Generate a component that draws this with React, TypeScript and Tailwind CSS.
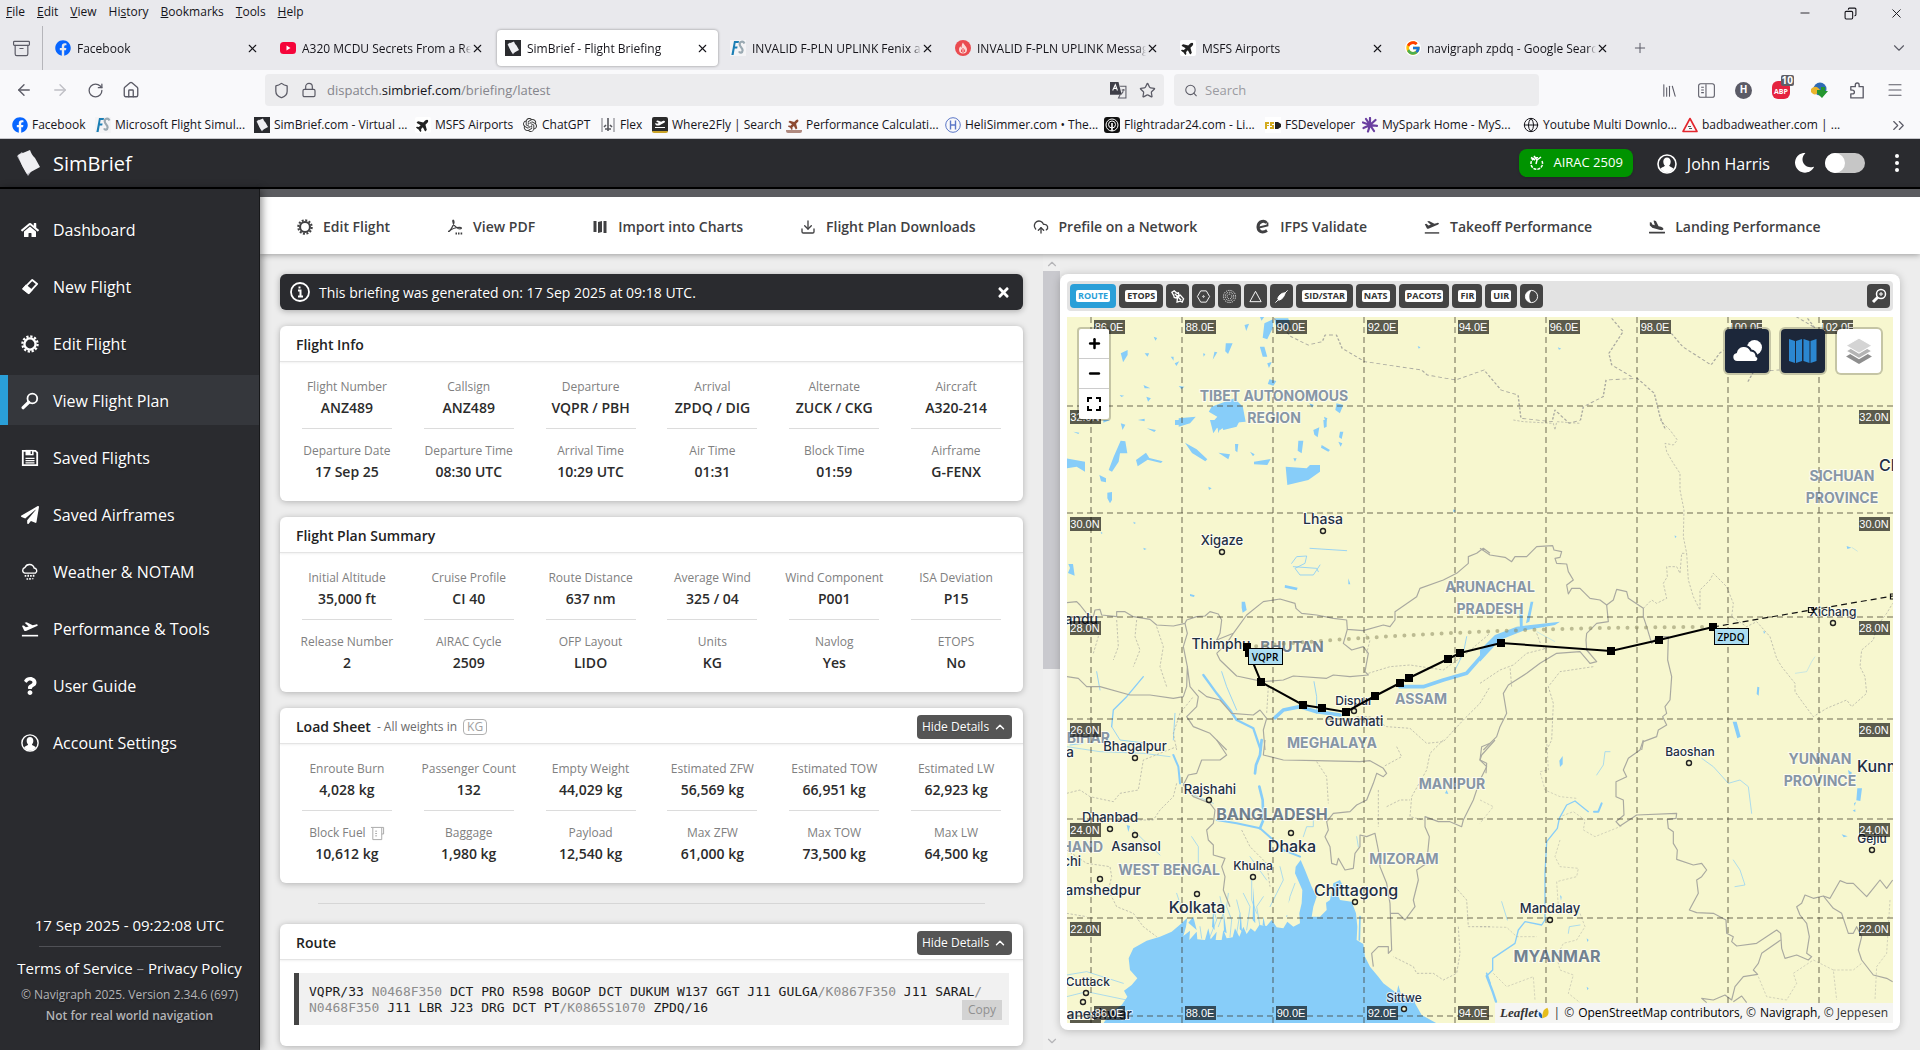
import type { ReactNode } from "react";
import {
    ArrowLeft, ArrowRight, ChevronDown, ChevronUp, ChevronsRight, Copy, Globe, House, Library,
    Lock, Menu, Minus, Plus, Puzzle, RotateCw, Search, Shield, Star, X, Archive, Download, CloudUpload
} from "lucide-react";
import {
    FaFacebook, FaHome, FaMoon, FaPaperPlane, FaPlane, FaPlaneArrival, FaPlaneDeparture,
    FaQuestion, FaTimes
} from "react-icons/fa";
import { FcGoogle } from "react-icons/fc";
import { SiOpenai } from "react-icons/si";

/* ---------- icons ---------- */

function Gear(){
    return (
        <svg viewBox="0 0 20 20" className="size-full" fill="none" stroke="currentColor">
            <circle cx="10" cy="10" r="6.2" strokeWidth="2.6" />
            <circle cx="10" cy="10" r="8.4" strokeWidth="2.6" strokeDasharray="2.5 1.9" />
        </svg>
    )
}

function Eraser(){
    return (
        <svg viewBox="0 0 20 20" className="size-full" fill="none" stroke="currentColor" strokeWidth="2">
            <path d="M12.5 2.2 18 6.6 8.5 16.8 2.6 12z" strokeLinejoin="round" />
            <path d="M5.6 8.6 11.6 13.4 8.5 16.8 2.6 12z" fill="currentColor" />
        </svg>
    )
}

function Magnifier(){
    return (
        <svg viewBox="0 0 20 20" className="size-full" fill="none" stroke="currentColor">
            <circle cx="12.6" cy="7.2" r="5.4" strokeWidth="2" />
            <path d="M8.6 11.4 2.4 17.4" strokeWidth="3.6" strokeLinecap="round" />
        </svg>
    )
}

function Floppy(){
    return (
        <svg viewBox="0 0 20 20" className="size-full" fill="none" stroke="currentColor">
            <path d="M2 2h14l2 2v14H2z" strokeWidth="2" />
            <path d="M5 1h9v6H5z" fill="currentColor" stroke="none" />
            <path d="M11.5 2.5v3" stroke="#2a2b2f" strokeWidth="1.6" />
            <path d="M5 10.5h10M5 13h10M5 15.5h10" strokeWidth="1.3" />
        </svg>
    )
}

function Snow(){
    return (
        <svg viewBox="0 0 20 20" className="size-full" fill="none" stroke="currentColor" strokeWidth="1.5">
            <path d="M4.2 11.2a3.2 3.2 0 0 1 .2-6.2 5.4 5.4 0 0 1 10.2.6 3 3 0 0 1 1.4 5.6z" />
            <path d="M5 13.4v2M8 13v2.4M11 13.4v2M14 13v2.4M7 17v1.6M10 16.6v2M13 17v1" strokeWidth="1.8" />
        </svg>
    )
}

function TakeOff(){
    return (
        <svg viewBox="0 0 20 20" className="size-full" fill="currentColor">
            <path d="M1 16.500h18v1.800H1z" />
            <path d="M1 6.500 3 6l2.500 2 3-.8L4 3l2.300-.6 6.700 3.500 3.600-1c1.800-.5 3 1 1.200 1.900L5.500 12.200c-.9.300-1.500.1-2-.5z" />
        </svg>
    )
}

function Person(){
    return (
        <svg viewBox="0 0 20 20" className="size-full" fill="currentColor">
            <circle cx="10" cy="10" r="9" fill="none" stroke="currentColor" strokeWidth="1.6" />
            <path d="M10 3.4c2.3 0 3.7 1.7 3.7 4 0 1.800-.7 3.400-1.600 4.200.2 1.300 3.300 1.700 4.500 3.200A8.400 8.400 0 0 1 10 18.500a8.400 8.400 0 0 1-6.600-3.700c1.200-1.500 4.300-1.900 4.500-3.200-.9-.8-1.600-2.400-1.600-4.200 0-2.300 1.400-4 3.700-4z" />
        </svg>
    )
}

function Pages(){
    return (
        <svg viewBox="0 0 24 28" className="size-full">
            <path d="M1 7 6 3l11 17-5 7z" fill="#b9b9c0" />
            <path d="M2 6 14 1c1 3 2 5 5 8l5 9-13 7C8 21 5 15 2 6z" fill="#efeff2" />
        </svg>
    )
}

function Charts(){
    return (
        <svg viewBox="0 0 16 16" className="size-full" fill="currentColor">
            <path d="M1.500 2h3v11h-3zM6 3l4-1v11l-4 1zM11.500 2h3v12h-3z" />
        </svg>
    )
}

function PdfSwirl(){
    return (
        <svg viewBox="0 0 16 16" className="size-full" fill="none" stroke="currentColor" strokeWidth="1.200">
            <path d="M1 12.500c2-.2 5-4.500 6-9C7.200.8 5.600.6 5.800 2.400 6 5.500 9 9.600 13 9.800c2 0 2-1.400 0-1.500C9 8.200 4 10 2 12.600" />
            <path d="M8.500 14.500h1.500M11 14.500h1.500M13.600 14.500h1.600" strokeWidth="2.200" />
        </svg>
    )
}

function EuroMark(){
    return (
        <svg viewBox="0 0 16 16" className="size-full" fill="none" stroke="currentColor">
            <path d="M12.500 4C11 1.200 4.500 1.500 4 7.500c0 5.500 4.500 6.800 9 4" strokeWidth="3" />
            <path d="M3 9 13.500 6.500V3.500" strokeWidth="1.800" />
        </svg>
    )
}

function Jug(){
    return (
        <svg viewBox="0 0 16 16" className="size-[15px]" fill="none" stroke="#a5a5a5">
            <path d="M1 1.500h13.500v7h-2M3 2v12.500h9.500V2M5.500 5.500h2M5.500 8h2M5.500 10.500h2" />
        </svg>
    )
}

function FsIcon(){
    return (
        <svg viewBox="0 0 16 16" className="size-4">
            <rect width="16" height="16" fill="#f4f4f6" />
            <path d="M4 1h5l-.4 2H5.600L5 6.500h2.600l-.4 2H4.700L3.600 15H1.400z" fill="#1c7fb5" />
            <path d="M14.500 3.500C13 .5 9.500 1.500 9.700 4.500c.2 3 3.200 3 2.900 6-.2 2.500-2.600 3-3.600.9" fill="none" stroke="#9aa9b2" strokeWidth="2.200" />
        </svg>
    )
}

function SimIcon(){
    return (
        <span className="block size-4 bg-[#2a2b2f] px-[2px] py-px"><Pages /></span>
    )
}

function YtIcon(){
    return (
        <svg viewBox="0 0 16 16" className="size-4">
            <rect y="2" width="16" height="12" rx="3.500" fill="#f5053a" />
            <path d="M6.500 5.500v5l4-2.500z" fill="#fff" />
        </svg>
    )
}

function FlameIcon(){
    return (
        <svg viewBox="0 0 16 16" className="size-4">
            <circle cx="8" cy="8" r="8" fill="#ea4b50" />
            <path d="M8 2.500c.5 2 4 4 4 7a4 4 0 0 1-8 0C4 8 4.800 7 5.500 6.300c.3 1 .7 1.300 1.200 1.400C6.500 5.500 7 3.500 8 2.500z" fill="#fbd9d6" />
            <path d="M8 8v5M6.500 9.500V12M9.600 9.500V12" stroke="#ea4b50" />
        </svg>
    )
}

function BoxIcon({ bg, children }: { bg: string; children: ReactNode }){
    return <span className={"flex size-4 items-center justify-center overflow-hidden rounded-xs text-[10px] " + bg}>{children}</span>
}

function AirportsIcon(){
    return <BoxIcon bg="bg-white text-[#222]"><FaPlane className="size-[14px] -rotate-45" /></BoxIcon>
}

function FlexIcon(){
    return (
        <svg viewBox="0 0 16 16" className="size-4" fill="none" stroke="#55565c">
            <path d="M2 1v14M14 1v14" stroke="#a0a0a6" strokeWidth="1.500" />
            <path d="M8 1v13M5 12h6M6 8l-2 2M10 8l2 2" strokeWidth="1.600" />
        </svg>
    )
}

function HeliIcon(){
    return (
        <svg viewBox="0 0 16 16" className="size-4" fill="none" stroke="#5b77c7">
            <circle cx="8" cy="8" r="7.300" strokeWidth="1" />
            <path d="M5.500 3.500v9M10.500 3.500v9M5.500 8h5" strokeWidth="1.400" />
        </svg>
    )
}

function RadarIcon(){
    return (
        <svg viewBox="0 0 16 16" className="size-4" fill="none" stroke="#fff">
            <rect width="16" height="16" rx="3" fill="#111" stroke="none" />
            <circle cx="8" cy="8" r="6" />
            <circle cx="8" cy="7.500" r="3.500" />
            <path d="M8 6v8" strokeWidth="1.600" />
        </svg>
    )
}

function FsdIcon(){
    return (
        <svg viewBox="0 0 16 16" className="size-4">
            <rect width="16" height="16" fill="#fff" />
            <path d="M0 5h4v2H2v1h2v1H2v3H0zM5 5h4v2H7v1h2v4H5v-2h2V9H5z" fill="#d3ab1e" />
            <path d="M10 5h3l3 2v3l-3 2h-3z" fill="#222" />
        </svg>
    )
}

function SparkIcon(){
    return (
        <svg viewBox="0 0 16 16" className="size-4" stroke="#6a3fa0" strokeWidth="2.200" strokeLinecap="round">
            <path d="M8 8 8 1M8 8 13.500 3M8 8l7 .8M8 8l4 6M8 8l-2 6.500M8 8l-6.500 3M8 8 1 5.500M8 8 4 2" />
        </svg>
    )
}

function WarnIcon(){
    return (
        <svg viewBox="0 0 16 16" className="size-4" fill="none">
            <path d="M8 1.500 15 14.500H1z" stroke="#e3262d" strokeWidth="1.600" strokeLinejoin="round" />
            <path d="M6 9.500h3M7 11.500h3" stroke="#555" />
        </svg>
    )
}

function PuzzleIcon(){
    return (
        <svg viewBox="0 0 16 16" className="size-[18px]" fill="none" stroke="currentColor" strokeWidth="1.200" strokeLinejoin="round">
            <path d="M2.500 5h4V3.500a1.700 1.700 0 0 1 3.400 0V5h3.600v10H2.500v-3.500H4a1.700 1.700 0 0 0 0-3.400H2.500z" />
        </svg>
    )
}

/* ---------- browser window ---------- */

const menus = [["", "F", "ile"], ["", "E", "dit"], ["", "V", "iew"], ["Hi", "s", "tory"], ["", "B", "ookmarks"], ["", "T", "ools"], ["", "H", "elp"]];

const tabs = [
    { icon: <FaFacebook className="size-4 text-[#0866ff]" />, title: "Facebook" },
    { icon: <YtIcon />, title: "A320 MCDU Secrets From a Rea" },
    { icon: <SimIcon />, title: "SimBrief - Flight Briefing", active: true },
    { icon: <FsIcon />, title: "INVALID F-PLN UPLINK Fenix a3" },
    { icon: <FlameIcon />, title: "INVALID F-PLN UPLINK Messag" },
    { icon: <AirportsIcon />, title: "MSFS Airports" },
    { icon: <FcGoogle className="size-4 rounded-full bg-white" />, title: "navigraph zpdq - Google Searc" },
];

const bookmarks = [
    { w: "w-[83px]", icon: <FaFacebook className="size-4 text-[#0866ff]" />, title: "Facebook" },
    { w: "w-[159px]", icon: <FsIcon />, title: "Microsoft Flight Simul..." },
    { w: "w-[161px]", icon: <SimIcon />, title: "SimBrief.com - Virtual ..." },
    { w: "w-[107px]", icon: <AirportsIcon />, title: "MSFS Airports" },
    { w: "w-[78px]", icon: <SiOpenai className="size-[14px] text-[#333]" />, title: "ChatGPT" },
    { w: "w-[52px]", icon: <FlexIcon />, title: "Flex" },
    { w: "w-[134px]", icon: <BoxIcon bg="bg-[#2b2b2b] text-white border-b-2 border-[#c9a227]"><FaPlaneDeparture /></BoxIcon>, title: "Where2Fly | Search" },
    { w: "w-[159px]", icon: <BoxIcon bg="text-[#8d4a32] border-b-3 border-[#b08a80]"><FaPlane className="size-3 -rotate-45" /></BoxIcon>, title: "Performance Calculati..." },
    { w: "w-[159px]", icon: <HeliIcon />, title: "HeliSimmer.com • The..." },
    { w: "w-[161px]", icon: <RadarIcon />, title: "Flightradar24.com - Li..." },
    { w: "w-[97px]", icon: <FsdIcon />, title: "FSDeveloper" },
    { w: "w-[161px]", icon: <SparkIcon />, title: "MySpark Home - MyS..." },
    { w: "w-[159px]", icon: <Globe className="size-4" strokeWidth={1.5} />, title: "Youtube Multi Downlo..." },
    { w: "w-[159px]", icon: <WarnIcon />, title: "badbadweather.com | ..." },
];

function Browser(){
    return (
        <div className="shrink-0 text-xs text-[#15141a]">
            <div className="flex h-[26px] items-start justify-between bg-[#e9e9ed]">
                <nav className="flex gap-3 pl-[6px] pt-[3px] text-[12px] leading-[18px]">
                    {menus.map(([a, b, c]) => <button key={a + b + c}>{a}<u>{b}</u>{c}</button>)}
                </nav>
                <div className="flex h-[26px] items-center gap-8 pr-4">
                    <button aria-label="Minimize"><Minus size={14} strokeWidth={1.5} /></button>
                    <button aria-label="Restore"><Copy size={13} strokeWidth={2} className="rotate-90" /></button>
                    <button aria-label="Close window"><X size={15} strokeWidth={1.5} /></button>
                </div>
            </div>
            <div className="flex h-11 items-stretch bg-[#e9e9ed]">
                <button className="mr-[4px] flex w-[43px] items-center justify-center border-r border-[#b5b5ba] text-[#5b5b66]" aria-label="Recent tabs">
                    <Archive size={19} strokeWidth={1.500} />
                </button>
                <div className="flex items-center gap-1">
                    {tabs.map((t) => (
                        <div key={t.title} className={"flex h-9 w-[221px] items-center rounded-sm pl-2 pr-[9px] " + (t.active ? "bg-white shadow-[0_0_3px_rgba(0,0,0,0.4)]" : "")}>
                            <span className="mr-[6px] shrink-0">{t.icon}</span>
                            <span className="min-w-0 flex-1 overflow-hidden whitespace-nowrap pt-[2px] mask-r-from-95%">{t.title}</span>
                            <button aria-label={"Close " + t.title}><X size={13} strokeWidth={2} /></button>
                        </div>
                    ))}
                    <button className="flex w-9 justify-center text-[#5b5b66]" aria-label="New tab"><Plus size={16} strokeWidth={1.500} /></button>
                </div>
                <button className="ml-auto mr-[12px] text-[#5b5b66]" aria-label="List all tabs"><ChevronDown size={18} strokeWidth={1.500} /></button>
            </div>
            <div className="flex h-10 items-center bg-[#f9f9fb] text-[#5b5b66]">
                <div className="flex w-[265px] shrink-0 items-center gap-[18px] pl-[15px]">
                    <button aria-label="Back"><ArrowLeft size={18} strokeWidth={1.800} /></button>
                    <button aria-label="Forward" className="text-[#bfbfc5]"><ArrowRight size={18} strokeWidth={1.800} /></button>
                    <button aria-label="Reload"><RotateCw size={17} strokeWidth={1.800} /></button>
                    <button aria-label="Home"><House size={18} strokeWidth={1.800} /></button>
                </div>
                <div className="flex h-8 min-w-0 flex-1 items-center rounded-sm bg-[#ececee] px-2">
                    <Shield size={17} strokeWidth={1.800} />
                    <Lock size={16} strokeWidth={1.800} className="ml-[11px]" />
                    <div role="textbox" aria-label="Address" className="ml-[10px] flex-1 pt-[2px] text-[13px] text-[#85858c]">
                        dispatch.<span className="text-[#15141a]">simbrief.com</span>/briefing/latest
                    </div>
                    <button aria-label="Translate" className="mr-3">
                        <svg viewBox="0 0 16 16" className="size-[17px]">
                            <path d="M0 0h8l3 12H0z" fill="#3f3f48" />
                            <path d="M2.500 8 5 2.500 7 8M3.500 6h3" stroke="#fff" fill="none" />
                            <path d="M9.500 4H15v11H8l1.500-3M11 7.500h3M12.500 6.500v1c0 2-1 3-2 3.500" stroke="#5b5b66" fill="none" />
                        </svg>
                    </button>
                    <button aria-label="Bookmark this page"><Star size={17} strokeWidth={1.800} /></button>
                </div>
                <label className="ml-[10px] flex h-8 w-[365px] items-center gap-[7px] rounded-sm bg-[#ececee] pl-[10px]">
                    <Search size={15} strokeWidth={1.800} />
                    <input aria-label="Search" placeholder="Search" className="w-full bg-transparent pt-[2px] text-[13px] outline-none placeholder:text-[#9b9ba1]" />
                </label>
                <div className="flex w-[381px] shrink-0 items-center justify-end gap-5 pr-4">
                    <button aria-label="Library"><Library size={17} strokeWidth={1.500} /></button>
                    <button aria-label="Sidebars">
                        <svg viewBox="0 0 16 14" className="h-[15px] w-[17px]" fill="none" stroke="currentColor"><rect x=".6" y=".6" width="14.800" height="12.800" rx="2" /><path d="M7.500 1v12M3 4h2.500M3 6.500h2.500M3 9h2.500" /></svg>
                    </button>
                    <button className="flex size-[17px] items-center justify-center rounded-full bg-[#5b5b66] text-[10px] font-bold text-white">H</button>
                    <button className="relative flex size-[18px] items-center justify-center rounded-md bg-[#e5233f] text-[7px] font-bold text-white">
                        <span className="pt-1">ABP</span>
                        <span className="absolute -right-[4px] -top-[6px] rounded-xs bg-[#5f5f66] px-px text-[10px] leading-[11px]">10</span>
                    </button>
                    <button aria-label="Download manager">
                        <svg viewBox="0 0 18 16" className="h-4 w-[18px]">
                            <circle cx="10" cy="7" r="6.500" fill="#2f6bb5" />
                            <path d="M1 7c4-4 7-2 9 1-3 5-6 6-9 2z" fill="#e9b52c" />
                            <path d="M7 8h4V5h4v4h3l-6 7-5-5z" fill="#25962f" />
                        </svg>
                    </button>
                    <button aria-label="Extensions"><PuzzleIcon /></button>
                    <button aria-label="Menu"><Menu size={18} strokeWidth={1.500} /></button>
                </div>
            </div>
            <div className="flex h-[29px] items-center border-b border-[#c6c6ca] bg-[#f9f9fb] pl-3 pt-[2px]">
                {bookmarks.map((b) => (
                    <a key={b.title} href="#" className={"flex shrink-0 items-center gap-1 whitespace-nowrap " + b.w}>
                        <span className="flex w-4 shrink-0 justify-center">{b.icon}</span>{b.title}
                    </a>
                ))}
                <button className="ml-auto mr-[12px] text-[#5b5b66]" aria-label="More bookmarks"><ChevronsRight size={19} strokeWidth={1.500} /></button>
            </div>
        </div>
    )
}

/* ---------- app shell ---------- */

function Header(){
    return (
        <header className="flex h-[50px] shrink-0 items-center border-b-2 border-black bg-[#2a2b2f] text-white text-shadow-xs">
            <span className="ml-4 h-7 w-6"><Pages /></span>
            <h1 className="ml-[13px] pt-[2px] text-[20px]">SimBrief</h1>
            <button className="ml-auto flex h-7 items-center gap-2 rounded-lg bg-[#009300] px-[10px] text-[13px] shadow">
                <svg viewBox="0 0 16 16" className="size-4" fill="none" stroke="currentColor" strokeWidth="1.500">
                    <path d="M13 6a5.800 5.800 0 1 1-4-3.200" strokeDasharray="3 1" />
                    <path d="M2 2.500 6 5M5 1l3 4-1 4M8 5l4-3" />
                </svg>
                AIRAC 2509
            </button>
            <button className="ml-6 flex items-center gap-[10px] pt-[2px] text-[16px]"><span className="size-5"><Person /></span>John Harris</button>
            <FaMoon className="ml-[24px] size-5 -rotate-12" />
            <input type="checkbox" role="switch" aria-label="Dark mode" className="ml-[11px] h-5 w-10 appearance-none rounded-full bg-[#c6c6c6] before:block before:size-5 before:rounded-full before:bg-white" />
            <button className="ml-[30px] mr-[21px] flex flex-col gap-[3px]" aria-label="More">
                <i className="size-1 rounded-full bg-white" /><i className="size-1 rounded-full bg-white" /><i className="size-1 rounded-full bg-white" />
            </button>
        </header>
    )
}

const links = [
    { icon: <FaHome className="size-full" />, label: "Dashboard" },
    { icon: <Eraser />, label: "New Flight" },
    { icon: <Gear />, label: "Edit Flight" },
    { icon: <Magnifier />, label: "View Flight Plan", active: true },
    { icon: <Floppy />, label: "Saved Flights" },
    { icon: <FaPaperPlane className="size-full" />, label: "Saved Airframes" },
    { icon: <Snow />, label: "Weather & NOTAM" },
    { icon: <TakeOff />, label: "Performance & Tools" },
    { icon: <FaQuestion className="size-full" />, label: "User Guide" },
    { icon: <Person />, label: "Account Settings" },
];

function Sidebar(){
    return (
        <aside className="z-10 flex w-[260px] shrink-0 flex-col border-r border-[#17181a] bg-[#2a2b2f] text-white shadow-[2px_0_8px_rgba(0,0,0,0.45)] text-shadow-sm">
            <nav className="mt-[15px] flex flex-col gap-[7px]">
                {links.map((l) => (
                    <a key={l.label} href="#" className={"flex h-[50px] items-center gap-[14px] border-l-8 pl-[13px] pt-[2px] text-[16px] " + (l.active ? "border-[#2a9fd8] bg-[#35373c]" : "border-transparent")}>
                        <span className="size-[18px]">{l.icon}</span>{l.label}
                    </a>
                ))}
            </nav>
            <div className="mt-auto flex flex-col items-center pb-[23px]">
                <p className="text-[15px] leading-6">17 Sep 2025 - 09:22:08 UTC</p>
                <hr className="mb-[9px] mt-[9px] w-[182px] border-[#505156]" />
                <p className="text-[15px] leading-6"><a href="#">Terms of Service</a> <span className="text-[#9a9a9e]">–</span> <a href="#">Privacy Policy</a></p>
                <p className="mt-[5px] text-[12px] leading-5 text-[#b4b4b7]">© Navigraph 2025. Version 2.34.6 (697)</p>
                <p className="text-[12px] font-semibold leading-[22px] text-[#b4b4b7]">Not for real world navigation</p>
            </div>
        </aside>
    )
}

const actions = [
    { icon: <Gear />, label: "Edit Flight" },
    { icon: <PdfSwirl />, label: "View PDF" },
    { icon: <Charts />, label: "Import into Charts" },
    { icon: <Download className="size-full" />, label: "Flight Plan Downloads" },
    { icon: <CloudUpload className="size-full" />, label: "Prefile on a Network" },
    { icon: <EuroMark />, label: "IFPS Validate" },
    { icon: <TakeOff />, label: "Takeoff Performance" },
    { icon: <FaPlaneArrival className="size-full" />, label: "Landing Performance" },
];

function ActionBar(){
    return (
        <nav className="z-[5] flex h-[65px] shrink-0 items-center gap-[57px] border-t-8 border-[#5b5c60] bg-white pl-[37px] pt-[2px] text-[14px] font-semibold text-[#404042] shadow-[0_1px_6px_rgba(0,0,0,0.35)]">
            {actions.map((a) => (
                <button key={a.label} className="flex items-center gap-[10px] whitespace-nowrap">
                    <span className="size-4">{a.icon}</span>{a.label}
                </button>
            ))}
        </nav>
    )
}

/* ---------- briefing cards ---------- */

function HideDetails(){
    return (
        <button className="ml-auto flex h-6 w-[95px] items-center justify-center gap-1 rounded-sm bg-[#555] text-[12px] text-white text-shadow-xs">
            Hide Details <ChevronUp size={14} strokeWidth={2.500} />
        </button>
    )
}

function Card({ title, extra, toggle, children }: { title: string; extra?: ReactNode; toggle?: boolean; children: ReactNode }){
    return (
        <section className="rounded-md bg-white shadow-[0_1px_6px_rgba(0,0,0,0.25)]">
            <div className="flex h-9 items-center border-b border-[#e4e4e4] pl-4 pr-[11px] pt-[2px] shadow-[0_1px_2px_rgba(0,0,0,0.06)]">
                <h2 className="text-[14px] font-semibold text-[#222]">{title}</h2>
                {extra}
                {toggle && <HideDetails />}
            </div>
            {children}
        </section>
    )
}

type StatRow = { label: string; value: string; jug?: boolean }[];

function Stats({ rows }: { rows: StatRow[] }){
    return (
        <div className="px-[6px] pb-[18px] pt-[15px]">
            {rows.map((row, i) => (
                <dl key={i} className="grid grid-cols-6 text-center">
                    {row.map((s) => (
                        <div key={s.label} className="flex flex-col items-center">
                            <dt className="flex h-5 items-center gap-1 whitespace-nowrap text-[12px] text-[#808080]">{s.label}{s.jug && <Jug />}</dt>
                            <dd className="h-[22px] text-[14px] font-semibold leading-[22px] text-[#2b2b2b]">{s.value}</dd>
                            {i == 0 && <hr className="mb-3 mt-[9px] w-[90px] border-[#dcdcdc]" />}
                        </div>
                    ))}
                </dl>
            ))}
        </div>
    )
}

const flightInfo: StatRow[] = [
    [
        { label: "Flight Number", value: "ANZ489" }, { label: "Callsign", value: "ANZ489" },
        { label: "Departure", value: "VQPR / PBH" }, { label: "Arrival", value: "ZPDQ / DIG" },
        { label: "Alternate", value: "ZUCK / CKG" }, { label: "Aircraft", value: "A320-214" },
    ],
    [
        { label: "Departure Date", value: "17 Sep 25" }, { label: "Departure Time", value: "08:30 UTC" },
        { label: "Arrival Time", value: "10:29 UTC" }, { label: "Air Time", value: "01:31" },
        { label: "Block Time", value: "01:59" }, { label: "Airframe", value: "G-FENX" },
    ],
];

const summary: StatRow[] = [
    [
        { label: "Initial Altitude", value: "35,000 ft" }, { label: "Cruise Profile", value: "CI 40" },
        { label: "Route Distance", value: "637 nm" }, { label: "Average Wind", value: "325 / 04" },
        { label: "Wind Component", value: "P001" }, { label: "ISA Deviation", value: "P15" },
    ],
    [
        { label: "Release Number", value: "2" }, { label: "AIRAC Cycle", value: "2509" },
        { label: "OFP Layout", value: "LIDO" }, { label: "Units", value: "KG" },
        { label: "Navlog", value: "Yes" }, { label: "ETOPS", value: "No" },
    ],
];

const loadSheet: StatRow[] = [
    [
        { label: "Enroute Burn", value: "4,028 kg" }, { label: "Passenger Count", value: "132" },
        { label: "Empty Weight", value: "44,029 kg" }, { label: "Estimated ZFW", value: "56,569 kg" },
        { label: "Estimated TOW", value: "66,951 kg" }, { label: "Estimated LW", value: "62,923 kg" },
    ],
    [
        { label: "Block Fuel", value: "10,612 kg", jug: true }, { label: "Baggage", value: "1,980 kg" },
        { label: "Payload", value: "12,540 kg" }, { label: "Max ZFW", value: "61,000 kg" },
        { label: "Max TOW", value: "73,500 kg" }, { label: "Max LW", value: "64,500 kg" },
    ],
];

function Dim({ children }: { children: ReactNode }){
    return <span className="text-[#8c8c8c]">{children}</span>
}

function Briefing(){
    return (
        <div className="flex min-h-0 min-w-0">
            <div className="flex min-w-0 flex-1 flex-col overflow-hidden p-5">
                <div className="mb-4 flex h-9 shrink-0 items-center rounded-md bg-[#2a2b2f] pl-[10px] pr-3 text-[14px] text-white shadow-[0_1px_6px_rgba(0,0,0,0.3)] text-shadow-xs">
                    <svg viewBox="0 0 20 20" className="mr-[9px] size-5" fill="none" stroke="currentColor" strokeWidth="1.800">
                        <circle cx="10" cy="10" r="9" />
                        <path d="M8 8.500h2.500V14M8 14.500h5M9.500 4.500v2" strokeWidth="2" />
                    </svg>
                    This briefing was generated on: 17 Sep 2025 at 09:18 UTC.
                    <button className="ml-auto" aria-label="Dismiss"><FaTimes size={15} /></button>
                </div>
                <div className="flex flex-col gap-4">
                    <Card title="Flight Info"><Stats rows={flightInfo} /></Card>
                    <Card title="Flight Plan Summary"><Stats rows={summary} /></Card>
                    <Card
                        title="Load Sheet"
                        toggle
                        extra={<span className="ml-[6px] flex items-center gap-[6px] text-[12px] text-[#6b6b6b]">- All weights in <span className="rounded-sm border border-[#b0b0b0] px-[3px] text-[12px] leading-[14px] text-[#a0a0a0]">KG</span></span>}
                    ><Stats rows={loadSheet} /></Card>
                </div>
                <hr className="mx-[38px] my-5 border-[#d6d6d6]" />
                <Card title="Route" toggle>
                    <div className="px-[14px] pb-[21px] pt-[13px]">
                        <div className="relative border-l-[5px] border-[#444] bg-[#f1f1f1] pb-[9px] pl-[10px] pt-[11px] font-['DejaVu_Sans_Mono',monospace] text-[13px] leading-4 text-[#1c1c1c]">
                            VQPR/33 <Dim>N0468F350</Dim> DCT PRO R598 BOGOP DCT DUKUM W137 GGT J11 GULGA<Dim>/K0867F350</Dim> J11 SARAL<Dim>/</Dim><br />
                            <Dim>N0468F350</Dim> J11 LBR J23 DRG DCT PT<Dim>/K0865S1070</Dim> ZPDQ/16
                            <button className="absolute bottom-[5px] right-[7px] h-5 w-10 bg-[#d3d3d3] font-['Open_Sans',sans-serif] text-[12px] text-[#909090]">Copy</button>
                        </div>
                    </div>
                </Card>
            </div>
            <div className="flex w-[17px] shrink-0 flex-col items-center bg-[#efefef] pb-[2px] pt-[3px] text-[#b5b5b8]">
                <ChevronUp size={14} />
                <div className="h-[398px] w-full bg-[#c9c9ce]" />
                <ChevronDown size={14} className="mt-auto" />
            </div>
        </div>
    )
}

/* ---------- map ---------- */

const meridians = [1091, 1182, 1273, 1364, 1455, 1546, 1637, 1728, 1819];
const parallels = [406, 513, 617, 719, 819, 918, 1016];

const waypoints = [
    [1247, 647], [1249, 653], [1261, 682], [1303, 705], [1322, 708], [1346, 712], [1375, 696], [1400, 683],
    [1409, 678], [1448, 659], [1460, 653], [1501, 643], [1611, 651], [1659, 640], [1713, 627],
];

type Place = { x: number; y: number; t: string; s?: number; end?: boolean; start?: boolean };

const cities: Place[] = [
    { x: 1323, y: 524, t: "Lhasa", s: 14 }, { x: 1222, y: 545, t: "Xigaze" }, { x: 1221, y: 649, t: "Thimphu", s: 14 },
    { x: 1098, y: 624, t: "andu", s: 14, end: true }, { x: 1354, y: 705, t: "Dispur", s: 12 }, { x: 1354, y: 726, t: "Guwahati" },
    { x: 1135, y: 751, t: "Bhagalpur" }, { x: 1074, y: 757, t: "a", s: 14, end: true }, { x: 1210, y: 794, t: "Rajshahi" },
    { x: 1110, y: 822, t: "Dhanbad" }, { x: 1136, y: 851, t: "Asansol" }, { x: 1292, y: 852, t: "Dhaka", s: 16 },
    { x: 1253, y: 870, t: "Khulna", s: 12 }, { x: 1081, y: 866, t: "chi", end: true }, { x: 1141, y: 895, t: "amshedpur", s: 14, end: true },
    { x: 1197, y: 913, t: "Kolkata", s: 16 }, { x: 1356, y: 896, t: "Chittagong", s: 16 }, { x: 1110, y: 986, t: "Cuttack", s: 12, end: true },
    { x: 1132, y: 1019, t: "aneshwar", s: 14, end: true }, { x: 1404, y: 1002, t: "Sittwe", s: 12 }, { x: 1550, y: 913, t: "Mandalay" },
    { x: 1690, y: 756, t: "Baoshan", s: 12 }, { x: 1857, y: 772, t: "Kunm", s: 16, start: true }, { x: 1879, y: 471, t: "Ch", s: 16, start: true },
    { x: 1833, y: 616, t: "Xichang", s: 12 }, { x: 1872, y: 843, t: "Gejiu", s: 12 },
];

const regions: Place[] = [
    { x: 1274, y: 401, t: "TIBET AUTONOMOUS" }, { x: 1274, y: 423, t: "REGION" }, { x: 1842, y: 481, t: "SICHUAN" },
    { x: 1842, y: 503, t: "PROVINCE" }, { x: 1490, y: 592, t: "ARUNACHAL" }, { x: 1490, y: 614, t: "PRADESH" },
    { x: 1421, y: 704, t: "ASSAM" }, { x: 1332, y: 748, t: "MEGHALAYA" }, { x: 1110, y: 743, t: "BIHAR", end: true },
    { x: 1103, y: 852, t: "HAND", end: true }, { x: 1169, y: 875, t: "WEST BENGAL" }, { x: 1404, y: 864, t: "MIZORAM" },
    { x: 1452, y: 789, t: "MANIPUR" }, { x: 1820, y: 764, t: "YUNNAN" }, { x: 1820, y: 786, t: "PROVINCE" },
];

const countries: Place[] = [
    { x: 1292, y: 652, t: "BHUTAN", s: 15 }, { x: 1272, y: 820, t: "BANGLADESH", s: 16 }, { x: 1557, y: 962, t: "MYANMAR", s: 16 },
];

const dots = [
    [1323, 531], [1222, 552], [1354, 711], [1135, 758], [1209, 800], [1110, 829], [1135, 835], [1291, 833], [1253, 877],
    [1100, 879], [1197, 894], [1355, 902], [1086, 993], [1083, 1002], [1404, 1009], [1550, 920], [1689, 763], [1833, 623], [1872, 850],
];

function Labels({ items, size, fill, weight }: { items: Place[]; size: number; fill: string; weight: number }){
    return (
        <g fill={fill} fontWeight={weight} stroke="#fff" strokeOpacity="0.7" strokeWidth="2" paintOrder="stroke" strokeLinejoin="round">
            {items.map((p, i) => (
                <text key={i} x={p.x} y={p.y} fontSize={p.s ?? size} textAnchor={p.end ? "end" : p.start ? "start" : "middle"}>{p.t}</text>
            ))}
        </g>
    )
}

function Tag({ x, y, t }: { x: number; y: number; t: string }){
    return (
        <g>
            <rect x={x} y={y} width="31" height="14" fill="#000" fillOpacity="0.63" />
            <text x={x + 15} y={y + 11} fill="#fff" fontSize="11" textAnchor="middle" fontFamily="Liberation Sans, sans-serif">{t}</text>
        </g>
    )
}

/* water and borders are traced on four sheets, three units to a map pixel */
function Terrain(){
    return (
        <>
            <g transform="translate(1050 740) scale(.33333)" fill="#87cdf9">
                <path d="M160 850 185 815 215 795 232 770 222 752 245 735 262 715 240 690 236 655 250 625 290 602 330 590 365 575 395 550 412 533 408 560 400 588 420 572 418 600 440 575 442 598 465 600 475 565 482 598 500 575 497 600 515 600 520 570 530 595 548 592 555 565 568 590 580 560 590 582 602 565 615 575 628 555 650 558 665 540 680 562 700 565 712 545 730 560 750 550 748 520 755 490 757 450 735 400 737 380 752 360 765 390 785 440 800 470 790 500 785 530 810 530 830 510 828 488 840 480 850 430 870 420 880 440 860 455 870 480 905 485 918 520 922 560 920 600 940 612 945 650 960 680 985 710 1000 730 1040 760 1045 735 1055 770 1080 780 1090 760 1095 790 1115 825 1160 850Z" />
                <path d="M415 548 430 530 440 570zM490 500l4 70-8-10zM520 510l10 70-8-5zM572 515l4 60-7-8zM610 440l6 110-8-10zM640 530l6 30-8-5z" />
                <g fill="none" stroke="#87cdf9" strokeLinecap="round" strokeLinejoin="round">
                    <path d="M635 0 630 45 618 75 615 100M628 140 638 180 640 240 630 265" strokeWidth="8" />
                    <path d="M370 45 385 80 390 130M500 240 560 250 630 265 670 300 700 330 750 350" strokeWidth="6" />
                    <path d="M50 20 150 35 280 40 360 50M400 130 420 160 490 190M760 290 770 260 790 260 790 235M925 320 920 290M50 705 110 695 220 730M50 770 110 755 230 780M425 290 445 320 445 380M250 270 280 300 330 345M660 500 680 460 700 420 690 380M710 530 720 470 735 430M605 420 605 480 620 520M380 460 400 520M600 350 650 420M480 590 500 540 485 490M540 590 545 540 530 500 535 460M560 580 570 520 560 480M590 570 600 500 580 460M630 560 620 500 640 470M455 595 450 560M510 470 520 520 505 560" strokeWidth="2" />
                    <path d="M1310 700 1320 730M1080 800 1110 845M930 530 928 600" strokeWidth="5" />
                </g>
                <path d="M800 480 812 500 800 530 792 510zM690 530 720 480 745 470 735 520z" fill="#f7f7cf" />
                <path d="M230 255l10 3-5 18zM1190 150l5 12-10-2z" />
            </g>
            <g transform="translate(1050 420) scale(.33333)" fill="#87cdf9">
                <path d="M50 115 105 125 105 155 80 140 50 145zM212 62l14 2 6 36-22 0-4 25-20 30-10-5 15-40zM258 120l30-22 10 16 40 10-5 5-40-10-30 20zM405 68l35 20 32 30-6 6-40-25zM375 0 410 0 400 14 375 15zM480 0 570 0 560 20 520 30 510 10 490 40zM707 140 770 145 780 135 810 135 810 155 775 180 712 195zM745 62l15 0-5 38-12-8zM790 30l18-8-5 30-10-8zM815 75l25 15-5 5-22-12zM870 35l10 0-5 22-8-5zM865 65l12 5-5 10zM600 95l14 8-5 6zM612 125l50-8-10 18-40-2zM555 72l10 0-3 25-6-5zM505 98l35 5-5 15zM148 165l20 10 0 12-15-3zM172 218l14-2 0 24-6 10-8-15zM55 432l14 0 5 35-20-8 6-15zM705 495l38 8-3 8-36-8zM420 522l14 4-2 5-12-3zM575 545l10 0 5 25-12 8-3-15zM895 475l6 18-6 0zM475 200l10 5-8 5zM1210 268l8 5-8 4zM730 115l10 0-5 10zM290 25l28 5-5 6zM70 35l18 3-3 4zM160 0 180 0 160 8zM500 0 520 0 505 40zM820 0l10 0 0 20-8 4zM250 305l8 4-6 3zM152 335l6 4-4 3zM280 383l10 4-8 3z" />
                <g fill="none" stroke="#87cdf9" strokeLinecap="round" strokeLinejoin="round">
                    <path d="M675 893 700 870 750 860 800 875 870 885M1050 800 1120 800 1180 780 1250 760 1320 680" strokeWidth="11" />
                    <path d="M460 765 500 820 540 870 560 900 610 925 632 990" strokeWidth="7" />
                    <path d="M280 770 230 830 190 870 185 920" strokeWidth="4" />
                    <path d="M725 430 740 410 770 408 765 430 735 445 750 465 790 465 810 435M730 440 800 445 805 455M780 385 890 392M185 920 210 960 290 970M515 755 530 800 560 870M140 755 150 810M792 785 800 830 800 880M1250 650 1240 700M1215 750 1240 700M375 880 370 960M60 975 100 970" strokeWidth="2.500" />
                </g>
            </g>
            <g transform="translate(1480 420) scale(.33333)" fill="#87cdf9">
                <path d="M0 690 45 645 110 620 240 605 225 615 130 632 60 660 0 725zM118 570l10 0 0 55-8 5zM152 545l8 0-12 60-10 5zM758 905l12 0 12 45-10 5zM832 800l6 2-2 25-6-5zM850 632l6 4-4 6zM584 346l6 4-5 4zM1100 378l14 5-12 4z" />
                <path d="M1115 382l18 12M945 760l35-5 15-30 10-15M170 635l55 30" fill="none" stroke="#87cdf9" strokeOpacity="0.600" strokeWidth="2" />
            </g>
            <g transform="translate(1480 740) scale(.33333)" fill="#87cdf9">
                <path d="M238 62l10-14 0 25-8 8zM1132 145l14 0-5 38-12-2zM1118 212l8-4 0 8zM1085 283l18 6-12 3zM1104 90l12 8-8 12zM1122 190l6-4-4 12zM320 595l6 5-4 6zM320 740l6 5-4 6zM240 465l5 5-2 12z" />
                <g fill="none" stroke="#87cdf9" strokeLinecap="round" strokeLinejoin="round">
                    <path d="M365 190 355 215 342 215" strokeWidth="6" />
                    <path d="M325 215 285 183 260 195 238 235 232 265 200 305 195 400 195 540 185 555 135 545 115 570 105 610 38 655 38 690 20 708" strokeWidth="4" />
                    <path d="M20 708 38 755 48 785" strokeWidth="7" />
                    <path d="M350 105 370 75 375 35 390 35M760 360 780 390 795 435 765 440M65 485 82 540M265 580 268 560 300 555M665 55 700 80 745 130 780 120 805 140 815 220" strokeWidth="2" />
                </g>
            </g>
            <g transform="translate(1030 190) scale(.56754 .33333)" fill="#87cdf9">
                <path d="M413 400l15-12 0 25-10 35-8-5zM430 385l25 0 5 25-12 10-15-15zM405 380l8 0-5 12zM378 405l8-4-5 22zM345 460l12 0-8 32-5-8zM325 485l5 2-8 22zM305 490l4 2-3 8zM405 470l8 0 5 30-8 0zM422 568l12 5-5 14-10-5zM418 520l8-4-5 18zM160 490l12-10 0 15-8 22zM255 520l8-6-5 14zM248 500l5 0 0 12zM202 490l8 0-3 10zM218 440l6 4-3 8zM262 588l10 2-5 8zM200 585l12 10-10 0zM158 615l8 2-5 4zM683 468l5 4-3 4zM930 472l6 4-4 3zM320 650l40-25 15 25 5 45-30 5-15 20-15-20 10-20-15-15zM262 685l30-5-10 20-20 10zM540 640l12 5-6 25-8-10zM518 680l6 5-3 15zM492 640l8 5-3 8zM205 620l8 5-5 10zM190 690l12-4 0 8zM160 700l8 4-5 16z" />
            </g>
        </>
    )
}

function Borders(){
    return (
        <g fill="none" stroke="#a9a9a0" strokeLinejoin="round">
            <g transform="translate(1050 420) scale(.33333)" strokeWidth="3.500">
                <path d="M50 548 80 545 90 555 110 580 130 590 135 570 150 568 155 585 200 590 200 575 225 575 250 590 300 598 320 615 370 618 405 610 410 600 440 590 465 588 480 575 505 582 515 600 510 640 500 660 550 640 590 585 640 545 690 537 735 550 738 565 755 580 800 585 850 595 890 600 892 628 940 632 1000 615 1020 620 1035 600 1035 575 1100 530 1110 505 1180 480 1220 460 1255 430 1255 410 1280 400 1300 385 1320 400" />
                <path d="M892 628 880 670 905 690 940 680 955 700 945 755 955 765 900 770 850 765 830 775 730 768 700 780 640 785 560 768 510 720 500 700M405 610 412 640 400 680 412 740 410 800 400 830 370 835 300 825 240 825 150 800 110 800 85 775 50 770M500 700 530 670 550 640M412 740 420 800 445 830 440 860 410 890 430 920 480 940 530 990M445 810 470 830 510 840 545 880 610 885 630 870 650 895 640 930 645 990" />
                <path d="M940 632 960 660 950 700M140 600 145 650 130 700M200 600 205 680 190 720M260 600 255 650 270 690 250 740M320 620 340 680 330 740 350 800M955 760 1020 740 1080 735 1180 750 1250 700 1320 640M655 800 650 880M920 890 960 890 1010 920 1080 925 1130 970 1180 965 1240 900 1290 850 1320 800M380 990 370 940 390 880 430 830" strokeWidth="2" strokeDasharray="7 5" />
            </g>
            <g transform="translate(1480 420) scale(.33333)" strokeWidth="3.500">
                <path d="M0 385 30 405 75 412 95 425 105 410 140 410 170 380 218 377 222 390 245 395 240 412 225 415 230 430 260 432 265 455 280 480 260 495 265 522 275 505 300 505 330 535 360 540 380 555 385 605 350 610 320 640 318 660 320 690 350 725 330 730 300 695 230 700 180 730 140 760 85 795 70 820 80 880 60 920 50 950 10 990" />
                <path d="M380 555 400 540 410 508 440 515 445 535 490 565 490 590 500 620 515 670 530 650 565 650 563 720 575 770 570 840 555 860 560 880 548 890 560 915 535 930 530 950 490 965 485 990" />
                <path d="M540 0 570 30 592 60 580 75 555 70 560 95 580 130 600 160 600 210 612 270 610 350 620 400 625 480 640 530 660 570 660 510 690 480 700 460 740 500 760 550 755 590 800 620 830 605 870 650 890 715 905 740 945 790 945 815 970 850 1000 890 1040 865 1100 840 1115 860 1160 820 1155 770 1140 740 1145 690 1180 660 1190 620 1220 580 1238 550M490 565 515 540 530 550 560 535 550 490 562 470 560 440 590 440 600 460 605 400 620 400M0 790 60 750 100 735 140 700 200 685M340 740 240 755 205 800 220 850 215 960 200 990M100 0 130 5 220 10 225 30 230 5 300 10M170 640 185 680 200 690M95 800 90 740" strokeWidth="2" strokeDasharray="7 5" />
            </g>
            <g transform="translate(1050 740) scale(.33333)" strokeWidth="3.500">
                <path d="M500 0 530 45 510 60 455 60 440 100 415 105 400 135 430 170 480 190 495 210 490 250 470 270 475 300 490 315 490 345 525 355 515 380 525 410 520 450 540 500M645 0 640 45 700 60 800 62 930 65 960 62 1000 85 1010 100 1000 110 980 100 970 130 950 180 920 195 900 215 850 220 830 245 835 270 825 290 840 320 845 370 860 375 865 355 885 390 910 385 915 340 930 320 930 285 950 290 975 280 985 330 990 380 1010 430 1020 490 1025 630 1015 640 1015 620 985 620 965 640 970 680" />
                <path d="M1320 10 1295 20 1290 60 1310 80 1290 120 1270 180 1240 240 1235 260 1200 245 1165 245 1125 230 1125 260 1138 290 1130 370 1100 390 1105 420 1090 480 1095 500 1065 540 1045 520 1020 520" />
                <path d="M50 160 90 150 120 170 190 185 210 160 265 150 280 60 330 40 380 20M380 130 370 170 330 210 310 240 260 240M50 330 110 370 180 380 185 410 175 450 200 500 250 520 280 560 320 590M50 520 110 530M1040 20 1055 50 1000 80M1180 0 1140 40 1130 90 1085 170 1080 230 1120 240M985 150 985 260M800 65 830 110 835 190M575 270 600 320 650 370 660 440M1215 440 1250 480 1255 560 1320 560M1225 560 1230 640 1220 700 1180 720 1150 700 1100 700 1090 680 1030 650M1010 200 1050 180 1080 180" strokeWidth="2" strokeDasharray="7 5" />
            </g>
            <g transform="translate(1480 740) scale(.33333)" strokeWidth="3.500">
                <path d="M45 0 5 45 0 60 20 70 18 100M490 0 480 30 445 55 430 90 440 110 408 125 408 170 430 180 432 225 408 245 420 258 470 225 590 220 588 235 562 238 565 265 580 275 580 310 592 330 590 358 640 375 665 370 680 390 665 410 650 420 655 460 628 510 650 518 700 520 738 540 740 580 760 590 755 605 770 618 830 610 890 570 902 580 905 625 915 655 950 645 985 660 995 650 980 640 988 590 980 550 960 525 950 500 965 490 975 465 1000 475 1030 468 1050 475 1080 422 1100 430 1120 430 1160 470 1180 445 1200 420 1220 445 1238 420" />
                <path d="M1030 468 1060 505 1085 520 1105 580 1120 580 1130 560 1145 590 1135 630 1145 660 1180 705 1220 715 1238 725M902 600 845 640 835 670 820 690 833 703 790 710 765 740 755 780 735 765 700 780 665 775 680 788M760 785 785 768 800 788" />
                <path d="M200 0 205 90 180 95 195 150 240 170 290 175M425 258 345 290 310 270 315 240 280 215 240 230M240 300 225 350 240 380 295 385 290 410 230 425 235 500 300 520 315 560 290 600 250 610 230 650 240 690 280 705 265 760 300 788M0 560 80 562 110 590 170 590M40 700 80 740 160 710 165 780M835 710 860 770 920 780 950 730 940 700 1000 660 1060 690 1070 780M1060 690 1120 690 1145 670M1230 480 1220 640 1190 680 1185 780M0 180 40 200 0 250" strokeWidth="2" strokeDasharray="7 5" strokeOpacity="0.700" />
            </g>
            <g transform="translate(1030 190) scale(.56754 .33333)" strokeWidth="2.500" strokeDasharray="7 5">
                <path d="M430 385 460 440 490 465 515 455 520 435 540 435 550 475 590 515 690 540 700 555 750 570 800 540 830 600 860 615 865 685 920 695 925 660 950 700 970 690 975 650 1010 620 1015 570 1070 565 1100 610 1110 680 1120 720" />
                <path d="M1025 385 1045 425 1020 490 1025 525 1060 560M1130 430 1150 470 1200 525 1215 490 1222 480M1370 385 1390 430M1265 575 1275 545 1320 540M1350 380 1380 410" />
            </g>
        </g>
    )
}

function MapCanvas(){
    return (
        <svg viewBox="1067 317 826 706" preserveAspectRatio="xMinYMin slice" className="block size-full" fontFamily="Inter, sans-serif" role="img" aria-label="Route map">
            <rect x="1067" y="317" width="826" height="706" fill="#f7f7cf" />
            <Terrain />
            <Borders />
            <Labels items={regions} size={14} fill="#8796a5" weight={700} />
            <Labels items={countries} size={15} fill="#728290" weight={700} />
            <Labels items={cities} size={13} fill="#1f2f44" weight={500} />
            <g fill="#f7f7cf" stroke="#222" strokeWidth="1.400">
                {dots.map(([x, y]) => <circle key={x + "," + y} cx={x} cy={y} r="2.500" />)}
            </g>
            <g stroke="#3c3729" strokeOpacity="0.370" strokeWidth="2" strokeDasharray="6 4">
                {meridians.map((x) => <path key={x} d={"M" + x + " 317V1023"} />)}
                {parallels.map((y) => <path key={y} d={"M1067 " + y + "H1893"} />)}
            </g>
            <path d="M1247 647Q1470 627 1713 627" fill="none" stroke="#8c8a60" strokeOpacity="0.550" strokeWidth="4" strokeLinecap="round" strokeDasharray="0 9.300" />
            <path d="M1713 627 1811 610 1893 596" fill="none" stroke="#111" strokeWidth="1.200" strokeDasharray="6 4" />
            <path d="M1808.500 607.500h5v5h-5zM1890.500 594h5v5h-5z" fill="none" stroke="#111" strokeWidth="1.200" />
            <polyline points={waypoints.map((p) => p.join(",")).join(" ")} fill="none" stroke="#000" strokeWidth="2" />
            {waypoints.map(([x, y]) => <rect key={x} x={x - 4} y={y - 4} width="8" height="8" />)}
            {[[1248, 648, "VQPR"], [1714, 628, "ZPDQ"]].map(([x, y, t]) => (
                <g key={t}>
                    <rect x={Number(x) + 0.5} y={Number(y) + 0.5} width="34" height="16" fill="#abdcf1" stroke="#000" />
                    <text x={Number(x) + 17} y={Number(y) + 13} fontSize="10" fontWeight="600" textAnchor="middle" fontFamily="Open Sans, sans-serif">{t}</text>
                </g>
            ))}
            {meridians.map((x, i) => <Tag key={x} x={x + 3} y={320} t={(86 + i * 2) + ".0E"} />)}
            {meridians.slice(0, 5).map((x, i) => <Tag key={x} x={x + 3} y={1006} t={(86 + i * 2) + ".0E"} />)}
            {parallels.slice(0, 6).map((y, i) => {
                const t = (32 - i * 2) + ".0N";
                return <g key={y}><Tag x={1070} y={y + 4} t={t} /><Tag x={1859} y={y + 4} t={t} /></g>
            })}
            <path d="M1070 1020h31v3h-31z" fillOpacity="0.630" />
        </svg>
    )
}

function Leaf(){
    return (
        <svg viewBox="0 0 14 14" className="h-[14px] w-3">
            <path d="M1 6c3 0 4 3 4 7-3 0-5-3-4-7z" fill="#1a5fb4" />
            <path d="M11 1c3 6 1 11-6 12 0-6 1-10 6-12z" fill="#e5bd1c" />
        </svg>
    )
}

const layers: { id: string; label?: string; icon?: ReactNode; on?: boolean }[] = [
    { id: "Route", label: "ROUTE", on: true },
    { id: "Etops", label: "ETOPS" },
    { id: "Navaids", icon: <><path d="M2 3.500 4.500 2l3 2.500L9 4l.5 2-3 3.500-2-.5-.5-2zM8 9l3-2.500 3.500 4L13 14l-2-1-3.500 1z" strokeWidth="1.400" /><path d="m5 5 7 7" strokeWidth="1.400" /></> },
    { id: "Fixes", icon: <><path d="M5 2h6l3.500 6L11 14H5L1.500 8z" /><circle cx="8" cy="8" r=".8" /></> },
    { id: "VORs", icon: <><circle cx="8" cy="8" r="6.500" strokeDasharray="1 1" /><circle cx="8" cy="8" r="4.500" strokeDasharray="1 1" /><circle cx="8" cy="8" r="2.500" strokeDasharray="1 1" /></> },
    { id: "Waypoints", icon: <path d="M8 2.500 14 13.500H2z" /> },
    { id: "Airways", icon: <><path d="M1.500 14.500 14.500 1.500" /><path d="M4 10c1-3 4-6 8-6-1 4-3 7-7 8z" fill="currentColor" /></> },
    { id: "Procedures", label: "SID/STAR" },
    { id: "Nats", label: "NATS" },
    { id: "Pacots", label: "PACOTS" },
    { id: "Fir", label: "FIR" },
    { id: "Uir", label: "UIR" },
    { id: "Night", icon: <><circle cx="8" cy="8" r="6.500" /><path d="M8 1.500c-3 3-3 10 0 13a6.500 6.500 0 0 1 0-13z" fill="currentColor" stroke="none" /></> },
];

function MapPanel(){
    return (
        <div className="min-h-0 min-w-0 pb-5 pr-5 pt-5">
            <section className="flex h-full flex-col gap-[6px] rounded-lg bg-white p-[7px] shadow-[0_1px_8px_rgba(0,0,0,0.22)]">
                <div className="flex h-[30px] shrink-0 items-center gap-[3px] rounded-sm bg-[#e3e3e3] px-[3px]">
                    {layers.map((l) => l.label
                        ? (
                            <button key={l.id} className={"h-6 rounded-sm px-[6px] " + (l.on ? "bg-[#2a9fd8] text-[#2a9fd8]" : "bg-[#444] text-[#333]")}>
                                <span className="block rounded-xs bg-white px-[2px] text-[9px] font-bold leading-3">{l.label}</span>
                            </button>
                        )
                        : (
                            <button key={l.id} aria-label={l.id} className="flex h-6 w-[23px] items-center justify-center rounded-sm bg-[#444] text-white">
                                <svg viewBox="0 0 16 16" className="size-[15px]" fill="none" stroke="currentColor">{l.icon}</svg>
                            </button>
                        )
                    )}
                    <button aria-label="Search map" className="ml-auto flex h-6 w-[23px] items-center justify-center rounded-sm bg-[#444] text-white">
                        <svg viewBox="0 0 16 16" className="size-4" fill="none" stroke="currentColor"><circle cx="10" cy="6" r="4.500" strokeWidth="1.500" /><path d="M6.800 9.200 2 14" strokeWidth="3" /><path d="M10 4v4M8 6h4" /></svg>
                    </button>
                </div>
                <div className="relative min-h-0 flex-1 overflow-hidden">
                    <MapCanvas />
                    <div className="absolute left-[10px] top-[10px] flex flex-col divide-y divide-[#ccc] rounded-sm border-2 border-black/20 bg-white bg-clip-padding text-black">
                        <button aria-label="Zoom in" className="flex size-[30px] items-center justify-center"><Plus size={15} strokeWidth={4} /></button>
                        <button aria-label="Zoom out" className="flex size-[30px] items-center justify-center"><Minus size={15} strokeWidth={4} /></button>
                        <button aria-label="Full screen" className="flex size-[30px] items-center justify-center">
                            <svg viewBox="0 0 14 14" className="size-[14px]" fill="none" stroke="currentColor" strokeWidth="2"><path d="M1 5V1h4M9 1h4v4M13 9v4H9M5 13H1V9" /></svg>
                        </button>
                    </div>
                    <div className="absolute right-[10px] top-[10px] flex gap-2">
                        <button aria-label="Weather" className="flex size-12 items-center justify-center rounded-md border-2 border-black/20 bg-[#1c273a] bg-clip-padding text-white">
                            <svg viewBox="0 0 32 32" className="size-8" fill="currentColor">
                                <circle cx="23.500" cy="12.500" r="7.500" />
                                <path d="M6 27a5 5 0 0 1-1-9.800 8 8 0 0 1 15-1.700 6 6 0 0 1 5.500 5.500A3.200 3.200 0 0 1 25 27z" stroke="#1c273a" strokeWidth="2" />
                            </svg>
                        </button>
                        <button aria-label="Charts" className="flex size-12 items-center justify-center rounded-md border-2 border-black/20 bg-[#1c273a] bg-clip-padding text-[#2b87d1]">
                            <svg viewBox="0 0 28 26" className="size-7" fill="currentColor"><path d="M0 1l6 2v22l-6-2zM7 3l6-2v22l-6 2zM14.500 1l6 2v22l-6-2zM21.500 3l6-2v22l-6 2z" /></svg>
                        </button>
                        <button aria-label="Layers" className="flex size-12 items-center justify-center rounded-md border-2 border-black/20 bg-white bg-clip-padding">
                            <svg viewBox="0 0 26 26" className="size-7">
                                <path d="M13 11 25 18 13 25 1 18z" fill="#8e8e8e" />
                                <path d="M13 6 25 13 13 20 1 13z" fill="#b4b4b4" stroke="#fff" />
                                <path d="M13 1 25 8 13 15 1 8z" fill="#d4d4d4" stroke="#fff" />
                            </svg>
                        </button>
                    </div>
                    <div className="absolute bottom-0 right-0 flex h-5 items-center whitespace-nowrap bg-[#f5f5f3] px-[5px] text-[12px] text-[#333]">
                        <a href="#" className="flex items-center font-['Liberation_Serif',serif] text-[13px] font-bold italic">Leaflet<Leaf /></a>
                        <span className="mx-1">|</span>© <a href="#" className="ml-1 text-black">OpenStreetMap contributors</a>,&nbsp;© <a href="#" className="ml-1 text-black">Navigraph</a>,&nbsp;© Jeppesen
                    </div>
                </div>
            </section>
        </div>
    )
}

export default function App(){
    return (
        <div className="flex h-screen flex-col overflow-hidden font-['Open_Sans',sans-serif]">
            <Browser />
            <Header />
            <div className="flex min-h-0 flex-1">
                <Sidebar />
                <main className="flex min-w-0 flex-1 flex-col bg-[#ededed]">
                    <ActionBar />
                    <div className="grid min-h-0 flex-1 grid-cols-[40fr_43fr] grid-rows-1">
                        <Briefing />
                        <MapPanel />
                    </div>
                </main>
            </div>
        </div>
    )
}
